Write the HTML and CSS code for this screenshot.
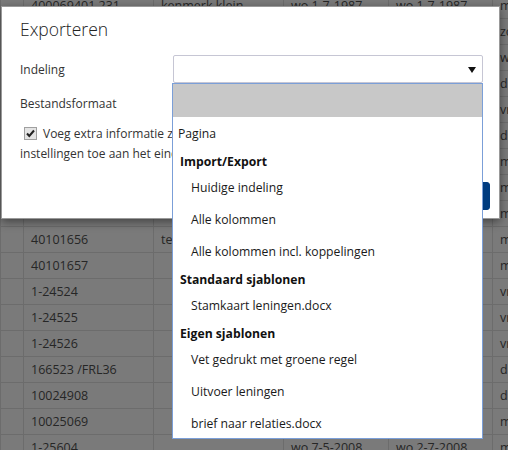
FILE: index.html
```html
<!DOCTYPE html>
<html lang="nl">
<head>
<meta charset="utf-8">
<title>Exporteren</title>
<link rel="stylesheet" href="styles.css">
</head>
<body>
<table class="grid">
  <colgroup><col class="c0"><col class="c1"><col class="c2"><col class="c3"><col class="c4"><col class="c5"></colgroup>
  <tbody>
    <tr><td></td><td>400069401 231</td><td>kenmerk klein</td><td>wo 1-7-1987</td><td>wo 1-7-1987</td><td>ma</td></tr>
    <tr><td></td><td>40069402</td><td></td><td></td><td></td><td>zo</td></tr>
    <tr><td></td><td>40069403</td><td></td><td></td><td></td><td>wo</td></tr>
    <tr><td></td><td>40069404</td><td></td><td></td><td></td><td>di</td></tr>
    <tr><td></td><td>40069405</td><td></td><td></td><td></td><td>vr</td></tr>
    <tr><td></td><td>40069406</td><td></td><td></td><td></td><td>di</td></tr>
    <tr><td></td><td>40069407</td><td></td><td></td><td></td><td>ma</td></tr>
    <tr><td></td><td>40069408</td><td></td><td></td><td></td><td>ma</td></tr>
    <tr><td></td><td>40069409</td><td></td><td></td><td></td><td>ma</td></tr>
    <tr><td></td><td>40101656</td><td>test</td><td></td><td></td><td>ma</td></tr>
    <tr><td></td><td>40101657</td><td></td><td></td><td></td><td>ma</td></tr>
    <tr><td></td><td>1-24524</td><td></td><td></td><td></td><td>vr</td></tr>
    <tr><td></td><td>1-24525</td><td></td><td></td><td></td><td>vr</td></tr>
    <tr><td></td><td>1-24526</td><td></td><td></td><td></td><td>vr</td></tr>
    <tr><td></td><td>166523 /FRL36</td><td></td><td></td><td></td><td>di</td></tr>
    <tr><td></td><td>10024908</td><td></td><td></td><td></td><td>di</td></tr>
    <tr><td></td><td>10025069</td><td></td><td></td><td></td><td>ma</td></tr>
    <tr><td></td><td>1-25604</td><td></td><td>wo 7-5-2008</td><td>wo 2-7-2008</td><td>ma</td></tr>
  </tbody>
</table>

<div class="modal">
  <h1 class="modal-title">Exporteren</h1>
  <div class="form-row">
    <label class="form-label">Indeling</label>
    <div class="select"><span class="arrow"></span></div>
  </div>
  <div class="form-row">
    <label class="form-label">Bestandsformaat</label>
    <div class="select"><span class="arrow"></span></div>
  </div>
  <div class="check-row">
    <span class="checkbox"><svg viewBox="0 0 13 13" width="13" height="13"><path d="M3 6.5 L5.3 9 L10 3.5" fill="none" stroke="#222" stroke-width="2"/></svg></span>Voeg extra informatie zoals filters en<br>instellingen toe aan het einde van het bestand
  </div>
  <div class="modal-footer">
    <button class="btn">Annuleren</button>
    <button class="btn btn-primary">Exporteren</button>
  </div>
</div>

<div class="dropdown">
  <div class="opt opt-empty"></div>
  <div class="opt">Pagina</div>
  <div class="grp">Import/Export</div>
  <div class="opt sub">Huidige indeling</div>
  <div class="opt sub">Alle kolommen</div>
  <div class="opt sub">Alle kolommen incl. koppelingen</div>
  <div class="grp">Standaard sjablonen</div>
  <div class="opt sub">Stamkaart leningen.docx</div>
  <div class="grp">Eigen sjablonen</div>
  <div class="opt sub">Vet gedrukt met groene regel</div>
  <div class="opt sub">Uitvoer leningen</div>
  <div class="opt sub">brief naar relaties.docx</div>
</div>
</body>
</html>
```

FILE: styles.css
```css
html, body {
  margin: 0;
  padding: 0;
  width: 508px;
  height: 450px;
  overflow: hidden;
  background: #7a7a7a;
  font-family: "Open Sans", "DejaVu Sans", sans-serif;
  font-size: 12px;
  color: #333;
}

.grid {
  border-collapse: collapse;
  table-layout: fixed;
  width: 600px;
  margin-top: -8px;
  color: #262626;
}
.grid .c0 { width: 23px; }
.grid .c1 { width: 130px; }
.grid .c2 { width: 130px; }
.grid .c3 { width: 105px; }
.grid .c4 { width: 104px; }
.grid .c5 { width: 108px; }
.grid td {
  height: 25px;
  padding: 0 0 0 7px;
  border: 1px solid #6c6c6c;
  white-space: nowrap;
  overflow: hidden;
  font-size: 12.5px;
  line-height: 25px;
}

.modal {
  position: absolute;
  left: 1px;
  top: 6px;
  width: 499px;
  height: 213px;
  box-sizing: border-box;
  background: #fff;
  border: 1px solid #999;
  box-shadow: 0 3px 9px rgba(0,0,0,0.45);
  padding: 10px 16px 0 18px;
}
.modal-title {
  margin: 0;
  font-size: 17.5px;
  font-weight: 300;
  line-height: 24px;
  color: #222;
}
.form-row {
  display: flex;
  align-items: center;
  margin-top: 14px;
  height: 28px;
}
.form-row + .form-row { margin-top: 6px; }
.form-label {
  width: 153px;
  flex: none;
}
.select {
  flex: 1;
  height: 28px;
  box-sizing: border-box;
  border: 1px solid #c6c6d4;
  border-radius: 2px;
  position: relative;
  background: #fff;
}
.arrow {
  position: absolute;
  right: 6px;
  top: 11px;
  width: 0;
  height: 0;
  border-left: 4px solid transparent;
  border-right: 4px solid transparent;
  border-top: 6px solid #111;
}
.check-row {
  margin-top: 7px;
  line-height: 20px;
}
.checkbox {
  display: inline-block;
  width: 13px;
  height: 13px;
  box-sizing: border-box;
  border: 1px solid #a0a0a0;
  background: #e4e4e4;
  margin: 0 6px 0 4px;
  vertical-align: -2px;
  position: relative;
}
.checkbox svg { position: absolute; left: -1px; top: -1px; }

.modal-footer {
  display: flex;
  justify-content: flex-end;
  gap: 8px;
  margin-top: 18px;
  margin-right: -7px;
}
.btn {
  height: 28px;
  padding: 0 14px;
  font: inherit;
  border: 1px solid #ccc;
  border-radius: 3px;
  background: #fff;
  color: #333;
}
.btn-primary {
  background: #003c80;
  border-color: #003c80;
  color: #fff;
}

.dropdown {
  position: absolute;
  left: 172px;
  top: 83px;
  width: 311px;
  height: 356px;
  box-sizing: border-box;
  border: 1px solid #7b9fd8;
  background: #fff;
  color: #1a1a1a;
  font-size: 12.2px;
}
.opt {
  height: 32px;
  box-sizing: border-box;
  padding-top: 2px;
  line-height: 30px;
  padding-left: 5px;
  white-space: nowrap;
}
.opt-empty {
  height: 33px;
  background: #c8c8c8;
}
.opt.sub { padding-left: 18px; }
.grp {
  height: 22px;
  box-sizing: border-box;
  padding-top: 4px;
  line-height: 18px;
  padding-left: 7px;
  font-weight: 700;
  color: #111;
}
```
